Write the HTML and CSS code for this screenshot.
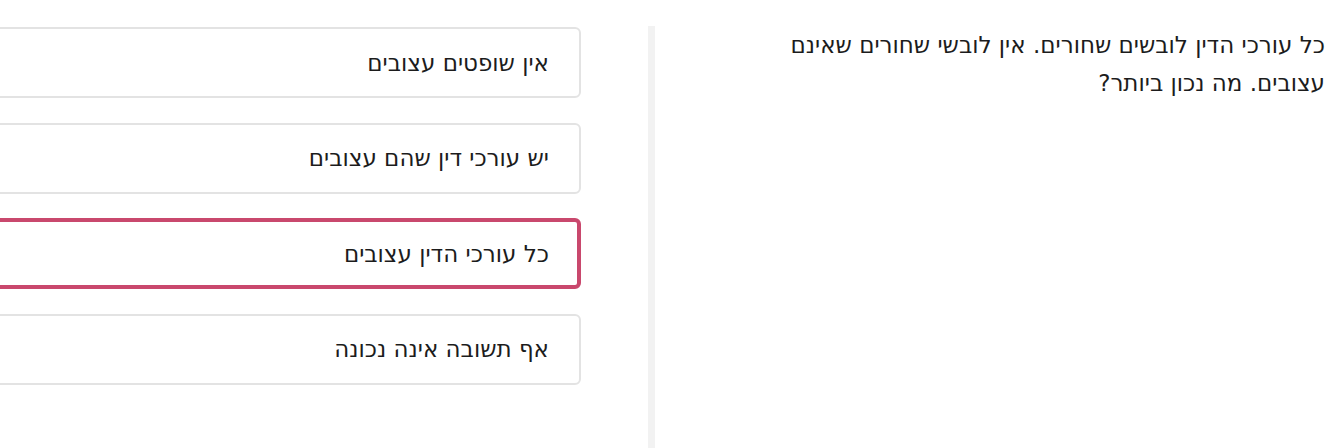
FILE: index.html
```html
<!DOCTYPE html>
<html lang="he" dir="rtl">
<head>
<meta charset="utf-8">
<link rel="stylesheet" href="styles.css">
</head>
<body>
<div class="quiz">
  <section class="question">
    <p class="question-text">כל עורכי הדין לובשים שחורים. אין לובשי שחורים שאינם עצובים. מה נכון ביותר?</p>
  </section>
  <div class="divider"></div>
  <section class="options">
    <div class="option">אין שופטים עצובים</div>
    <div class="option">יש עורכי דין שהם עצובים</div>
    <div class="option selected">כל עורכי הדין עצובים</div>
    <div class="option">אף תשובה אינה נכונה</div>
  </section>
</div>
</body>
</html>
```

FILE: styles.css
```css
html, body {
  margin: 0;
  padding: 0;
  background: #ffffff;
}
body {
  font-family: "DejaVu Sans", sans-serif;
  color: #1c1c1c;
  overflow: hidden;
}
.quiz {
  display: flex;
  flex-direction: row;
  direction: rtl;
  height: 448px;
  padding-top: 26px;
  box-sizing: border-box;
  overflow: hidden;
}
.question {
  flex: 0 0 689px;
  box-sizing: border-box;
  padding-right: 19px;
  padding-left: 20px;
}
.question-text {
  margin: 0;
  max-width: 560px;
  font-size: 23px;
  line-height: 38px;
}
.divider {
  flex: 0 0 7px;
  background: #f2f2f2;
}
.options {
  flex: 0 0 auto;
  padding-top: 1px;
  padding-right: 67px;
  display: flex;
  flex-direction: column;
  gap: 24.5px;
}
.option {
  width: 700px;
  height: 71px;
  box-sizing: border-box;
  border: 2px solid #e3e3e3;
  border-radius: 6px;
  padding: 0 30px;
  display: flex;
  align-items: center;
  font-size: 23px;
}
.option.selected {
  border: 4px solid #c9486d;
  padding: 0 28px;
}
```
